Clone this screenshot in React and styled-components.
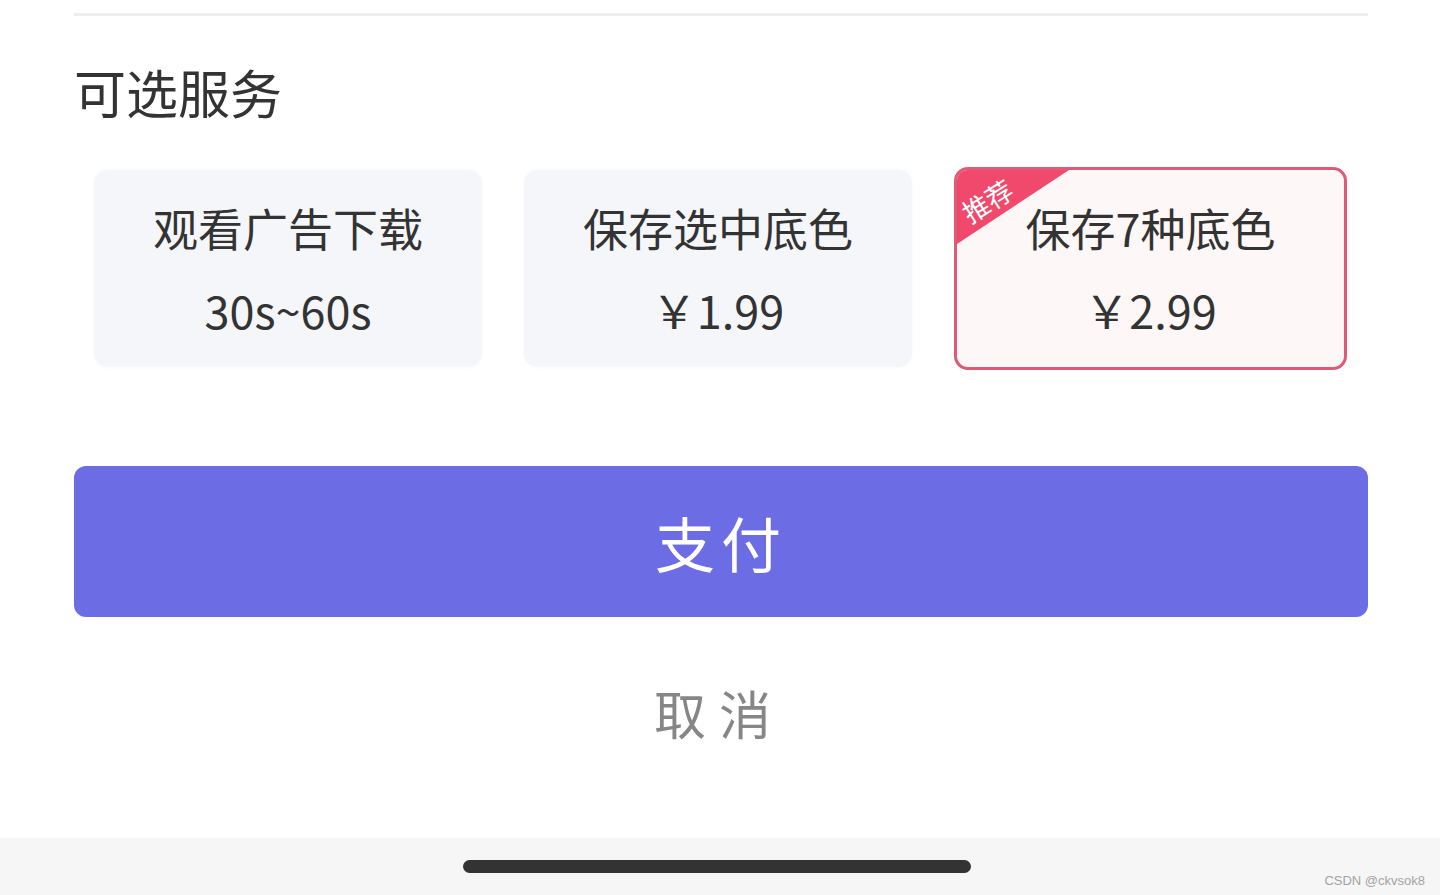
import React, { useState } from "react";
import styled, { createGlobalStyle } from "styled-components";

const Global = createGlobalStyle`
  html, body { margin: 0; padding: 0; background: #ffffff; }
  body {
    width: 1440px;
    height: 895px;
    overflow: hidden;
    font-family: "Noto Sans CJK SC", "Noto Sans", sans-serif;
  }
  * { box-sizing: border-box; }
`;

const Screen = styled.div`
  width: 1440px;
  height: 895px;
  display: flex;
  flex-direction: column;
  background: #ffffff;
`;

const Sheet = styled.div`
  flex: 1;
  display: flex;
  flex-direction: column;
  padding: 13px 72px 0 74px;
`;

const Divider = styled.div`
  height: 3px;
  background: #eeeeee;
`;

const Title = styled.h2`
  margin: 50px 0 0 0;
  font-size: 52px;
  line-height: 52px;
  font-weight: 400;
  color: #333333;
`;

const Options = styled.div`
  margin-top: 49px;
  height: 203px;
  display: grid;
  grid-template-columns: 388px 388px 393px;
  align-items: center;
  gap: 42px;
  padding: 0 20px;
`;

const Card = styled.button`
  position: relative;
  height: ${(p) => (p.$active ? "203px" : "197px")};
  padding: 0;
  border: ${(p) => (p.$active ? "3px solid #de5b78" : "none")};
  border-radius: 14px;
  background: ${(p) => (p.$active ? "#fdf7f8" : "#f5f6fa")};
  box-shadow: ${(p) => (p.$active ? "none" : "0 0 4px rgba(0,0,0,0.03)")};
  overflow: hidden;
  display: flex;
  flex-direction: column;
  align-items: center;
  font-family: inherit;
  cursor: pointer;
`;

const CardName = styled.div`
  margin-top: 30px;
  font-size: 45px;
  line-height: 56px;
  color: #333333;
`;

const CardPrice = styled.div`
  margin-top: 26px;
  font-size: 45px;
  line-height: 56px;
  color: #333333;
`;

const Ribbon = styled.div`
  position: absolute;
  top: 0;
  left: 0;
  width: 112px;
  height: 74px;
  background: #f0496c;
  clip-path: polygon(0 0, 100% 0, 0 100%);
`;

const RibbonText = styled.span`
  position: absolute;
  top: 17px;
  left: 3px;
  font-size: 27px;
  line-height: 27px;
  color: #ffffff;
  white-space: nowrap;
  transform: rotate(-32deg);
  transform-origin: center;
`;

const PayButton = styled.button`
  margin-top: 96px;
  height: 151px;
  width: 100%;
  border: none;
  border-radius: 12px;
  background: #6c6ce5;
  color: #ffffff;
  font-family: inherit;
  font-size: 60px;
  letter-spacing: 6px;
  padding-left: 6px;
  cursor: pointer;
`;

const CancelButton = styled.button`
  margin-top: 70px;
  align-self: center;
  border: none;
  background: transparent;
  color: #868686;
  font-family: inherit;
  font-size: 52px;
  line-height: 52px;
  letter-spacing: 13px;
  padding: 0 4px 0 0;
  cursor: pointer;
`;

const HomeBar = styled.div`
  position: relative;
  height: 57px;
  background: #f6f6f6;
  display: flex;
  justify-content: center;
  padding: 22px 6px 0 0;
`;

const Indicator = styled.div`
  width: 508px;
  height: 13px;
  border-radius: 7px;
  background: #333333;
`;

const Watermark = styled.span`
  position: absolute;
  right: 15px;
  bottom: 7px;
  font-family: "Liberation Sans", Arial, sans-serif;
  font-size: 13px;
  line-height: 15px;
  color: #a3a3a3;
`;

const options = [
  { name: "观看广告下载", price: "30s~60s" },
  { name: "保存选中底色", price: "￥1.99" },
  { name: "保存7种底色", price: "￥2.99", tag: "推荐" },
];

export default function App() {
  const [active, setActive] = useState(2);
  return (
    <Screen>
      <Global />
      <Sheet>
        <Divider />
        <Title>可选服务</Title>
        <Options>
          {options.map((o, i) => (
            <Card key={o.name} $active={i === active} onClick={() => setActive(i)}>
              {o.tag && (
                <Ribbon>
                  <RibbonText>{o.tag}</RibbonText>
                </Ribbon>
              )}
              <CardName>{o.name}</CardName>
              <CardPrice>{o.price}</CardPrice>
            </Card>
          ))}
        </Options>
        <PayButton>支付</PayButton>
        <CancelButton>取消</CancelButton>
      </Sheet>
      <HomeBar>
        <Indicator />
        <Watermark>CSDN @ckvsok8</Watermark>
      </HomeBar>
    </Screen>
  );
}
